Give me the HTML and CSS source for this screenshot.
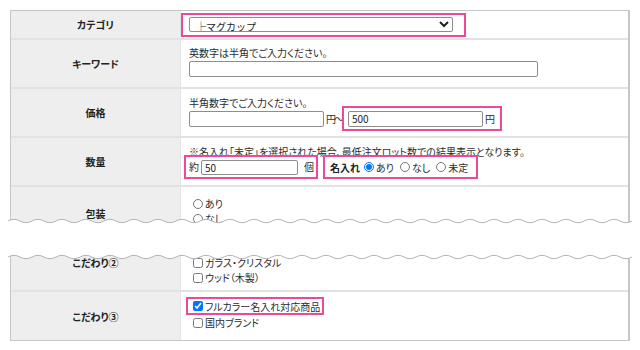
FILE: index.html
```html
<!DOCTYPE html>
<html lang="ja">
<head>
    <meta charset="UTF-8">
    <title>商品検索</title>
    <link rel="stylesheet" href="styles.css">
</head>
<body>
    <div class="page">

        <!-- 上半分 -->
        <div class="frag frag-top">
            <div class="sheet sheet-top">
                <div class="row row-cat">
                    <div class="label">カテゴリ</div>
                    <div class="value">
                        <div class="mark mark-cat">
                            <select class="cat-select">
                                <option>├マグカップ</option>
                            </select>
                        </div>
                    </div>
                </div>

                <div class="row row-kw">
                    <div class="label">キーワード</div>
                    <div class="value value-stack">
                        <p class="note">英数字は半角でご入力ください。</p>
                        <input type="text" class="field field-kw">
                    </div>
                </div>

                <div class="row row-price">
                    <div class="label">価格</div>
                    <div class="value value-stack">
                        <p class="note">半角数字でご入力ください。</p>
                        <div class="inline">
                            <input type="text" class="field field-price">
                            <span class="unit unit-from">円～</span>
                            <div class="mark mark-price">
                                <input type="text" class="field field-price" value="500">
                                <span class="unit">円</span>
                            </div>
                        </div>
                    </div>
                </div>

                <div class="row row-qty">
                    <div class="label">数量</div>
                    <div class="value value-stack">
                        <p class="note">※名入れ「未定」を選択された場合、最低注文ロット数での結果表示となります。</p>
                        <div class="inline">
                            <div class="mark mark-qty">
                                <span class="unit">約</span>
                                <input type="text" class="field field-qty" value="50">
                                <span class="unit unit-ko">個</span>
                            </div>
                            <div class="mark mark-name">
                                <b class="name-title">名入れ</b>
                                <label class="opt"><input type="radio" name="naire" checked>あり</label>
                                <label class="opt"><input type="radio" name="naire">なし</label>
                                <label class="opt"><input type="radio" name="naire">未定</label>
                            </div>
                        </div>
                    </div>
                </div>

                <div class="row row-pack">
                    <div class="label">包装</div>
                    <div class="value value-list">
                        <label class="line"><input type="radio" name="pack">あり</label>
                        <label class="line"><input type="radio" name="pack">なし</label>
                        <label class="line"><input type="radio" name="pack">未定</label>
                    </div>
                </div>
            </div>

            <svg class="tear tear-bottom" width="624" height="10">
                <defs>
                    <pattern id="waveDown" width="24" height="10" patternUnits="userSpaceOnUse">
                        <path d="M0 5 Q6 1.6 12 5 T24 5 L24 10 L0 10 Z" fill="#fff"/>
                        <path d="M0 5 Q6 1.6 12 5 T24 5" fill="none" stroke="#b4b4b4" stroke-width="1"/>
                    </pattern>
                </defs>
                <rect width="624" height="10" fill="url(#waveDown)"/>
            </svg>
        </div>

        <!-- 下半分 -->
        <div class="frag frag-bottom">
            <div class="sheet sheet-bottom">
                <div class="row row-pref2">
                    <div class="label label-top">こだわり②</div>
                    <div class="value value-list value-pref2">
                        <label class="line"><input type="checkbox">ガラス・クリスタル</label>
                        <label class="line"><input type="checkbox">ウッド（木製）</label>
                    </div>
                </div>

                <div class="row row-pref3">
                    <div class="label">こだわり③</div>
                    <div class="value value-list value-pref3">
                        <div class="mark mark-full">
                            <label class="line"><input type="checkbox" checked>フルカラー名入れ対応商品</label>
                        </div>
                        <label class="line"><input type="checkbox">国内ブランド</label>
                    </div>
                </div>
            </div>

            <svg class="tear tear-top" width="624" height="12">
                <defs>
                    <pattern id="waveUp" width="24" height="12" patternUnits="userSpaceOnUse">
                        <path d="M0 7 Q6 3.6 12 7 T24 7 L24 0 L0 0 Z" fill="#fff"/>
                        <path d="M0 7 Q6 3.6 12 7 T24 7" fill="none" stroke="#b4b4b4" stroke-width="1"/>
                    </pattern>
                </defs>
                <rect width="624" height="12" fill="url(#waveUp)"/>
            </svg>
        </div>

    </div>
</body>
</html>
```

FILE: styles.css
```css
body {
    margin: 0;
    padding: 0;
    background-color: #fff;
    color: #2b2b2b;
    font-family: "Noto Sans CJK JP", "Noto Sans", sans-serif;
    font-size: 10px;
    font-feature-settings: "palt";
}

.page {
    padding-top: 10px;
}

/* 切り取り部分 */
.frag {
    position: relative;
    overflow: hidden;
}

.frag-top {
    height: 216px;
}

.frag-bottom {
    margin-top: 24px;
    height: 91px;
}

.tear {
    position: absolute;
    left: 8px;
    display: block;
}

.tear-bottom {
    bottom: 0;
}

.tear-top {
    top: 0;
}

/* 表 */
.sheet {
    margin: 0 10px;
    border-left: 1px solid #c6c6c6;
    border-right: 2px solid #c6c6c6;
}

.sheet-top {
    border-top: 1px solid #c6c6c6;
}

.sheet-bottom {
    border-bottom: 1px solid #c6c6c6;
}

.row {
    display: flex;
    box-sizing: border-box;
    border-bottom: 2px solid #e2e2e2;
}

.row-cat { height: 29px; }
.row-kw { height: 49px; }
.row-price { height: 49px; }
.row-qty { height: 49px; }
.row-pack { height: 52px; border-bottom: none; }
.row-pref2 { height: 42px; }
.row-pref3 { height: 48px; border-bottom: none; }

.label {
    width: 169px;
    flex-shrink: 0;
    background-color: #eeeeee;
    border-right: 1px solid #e4e4e4;
    display: flex;
    align-items: center;
    justify-content: center;
    font-weight: bold;
    font-size: 10px;
    color: #222;
}

.label-top {
    align-items: flex-start;
    padding-top: 5px;
}

.value {
    flex: 1;
    padding: 0 8px;
    display: flex;
    align-items: center;
}

.value-stack {
    flex-direction: column;
    align-items: flex-start;
    justify-content: flex-start;
    padding-top: 7px;
}

.row-price .value-stack,
.row-qty .value-stack {
    padding-top: 8px;
}

.value-list {
    flex-direction: column;
    align-items: flex-start;
    justify-content: flex-start;
    padding-top: 9px;
}

.value-pref2 {
    padding-top: 5px;
}

.value-pref3 {
    padding-top: 5px;
}

.note {
    margin: 0;
    line-height: 12px;
    white-space: nowrap;
}

/* 入力欄 */
.field {
    box-sizing: border-box;
    height: 16px;
    padding: 0 3px;
    border: 1px solid #8d8d8d;
    border-radius: 2px;
    font-family: inherit;
    font-size: 10px;
    color: #222;
    background: #fff;
}

.field-kw {
    margin-top: 2px;
    width: 349px;
}

.field-price {
    width: 135px;
}

.field-qty {
    width: 97px;
    height: 15px;
}

.cat-select {
    box-sizing: border-box;
    width: 264px;
    height: 15px;
    padding: 0 2px;
    border: 1px solid #8d8d8d;
    border-radius: 2px;
    font-family: inherit;
    font-size: 10px;
    color: #222;
    background: #fff;
}

.inline {
    display: flex;
    align-items: center;
    margin-top: -3px;
}

.unit {
    line-height: 12px;
    margin: 0 2px;
}

.unit-from {
    margin-right: 0;
    letter-spacing: -2px;
}

.unit-ko {
    margin-left: 6px;
}

/* ピンク枠 */
.mark {
    display: flex;
    align-items: center;
    box-sizing: border-box;
    border: 2px solid #ec4a98;
}

.mark-cat {
    height: 24px;
    margin-left: -8px;
    padding: 0 11px 0 6px;
}

.mark-price {
    height: 25px;
    margin-left: 0;
    padding: 0 3px 0 4px;
}

.mark-qty {
    height: 24px;
    margin-left: -5px;
    padding: 0 0 0 1px;
}

.mark-name {
    height: 24px;
    margin-left: 5px;
    padding: 0 8px 0 5px;
}

.name-title {
    margin-right: 4px;
    color: #222;
}

.opt {
    display: flex;
    align-items: center;
    margin-right: 6px;
}

.opt:last-child {
    margin-right: 0;
}

.mark-full {
    height: 18px;
    margin-left: -3px;
    padding: 0 2px 0 1px;
}

/* チェック・ラジオ */
.line {
    display: flex;
    align-items: center;
    line-height: 15px;
    height: 15px;
}

input[type="radio"],
input[type="checkbox"] {
    width: 10px;
    height: 10px;
    margin: 0 2px 0 4px;
}

.opt input[type="radio"] {
    margin-left: 0;
}
```
